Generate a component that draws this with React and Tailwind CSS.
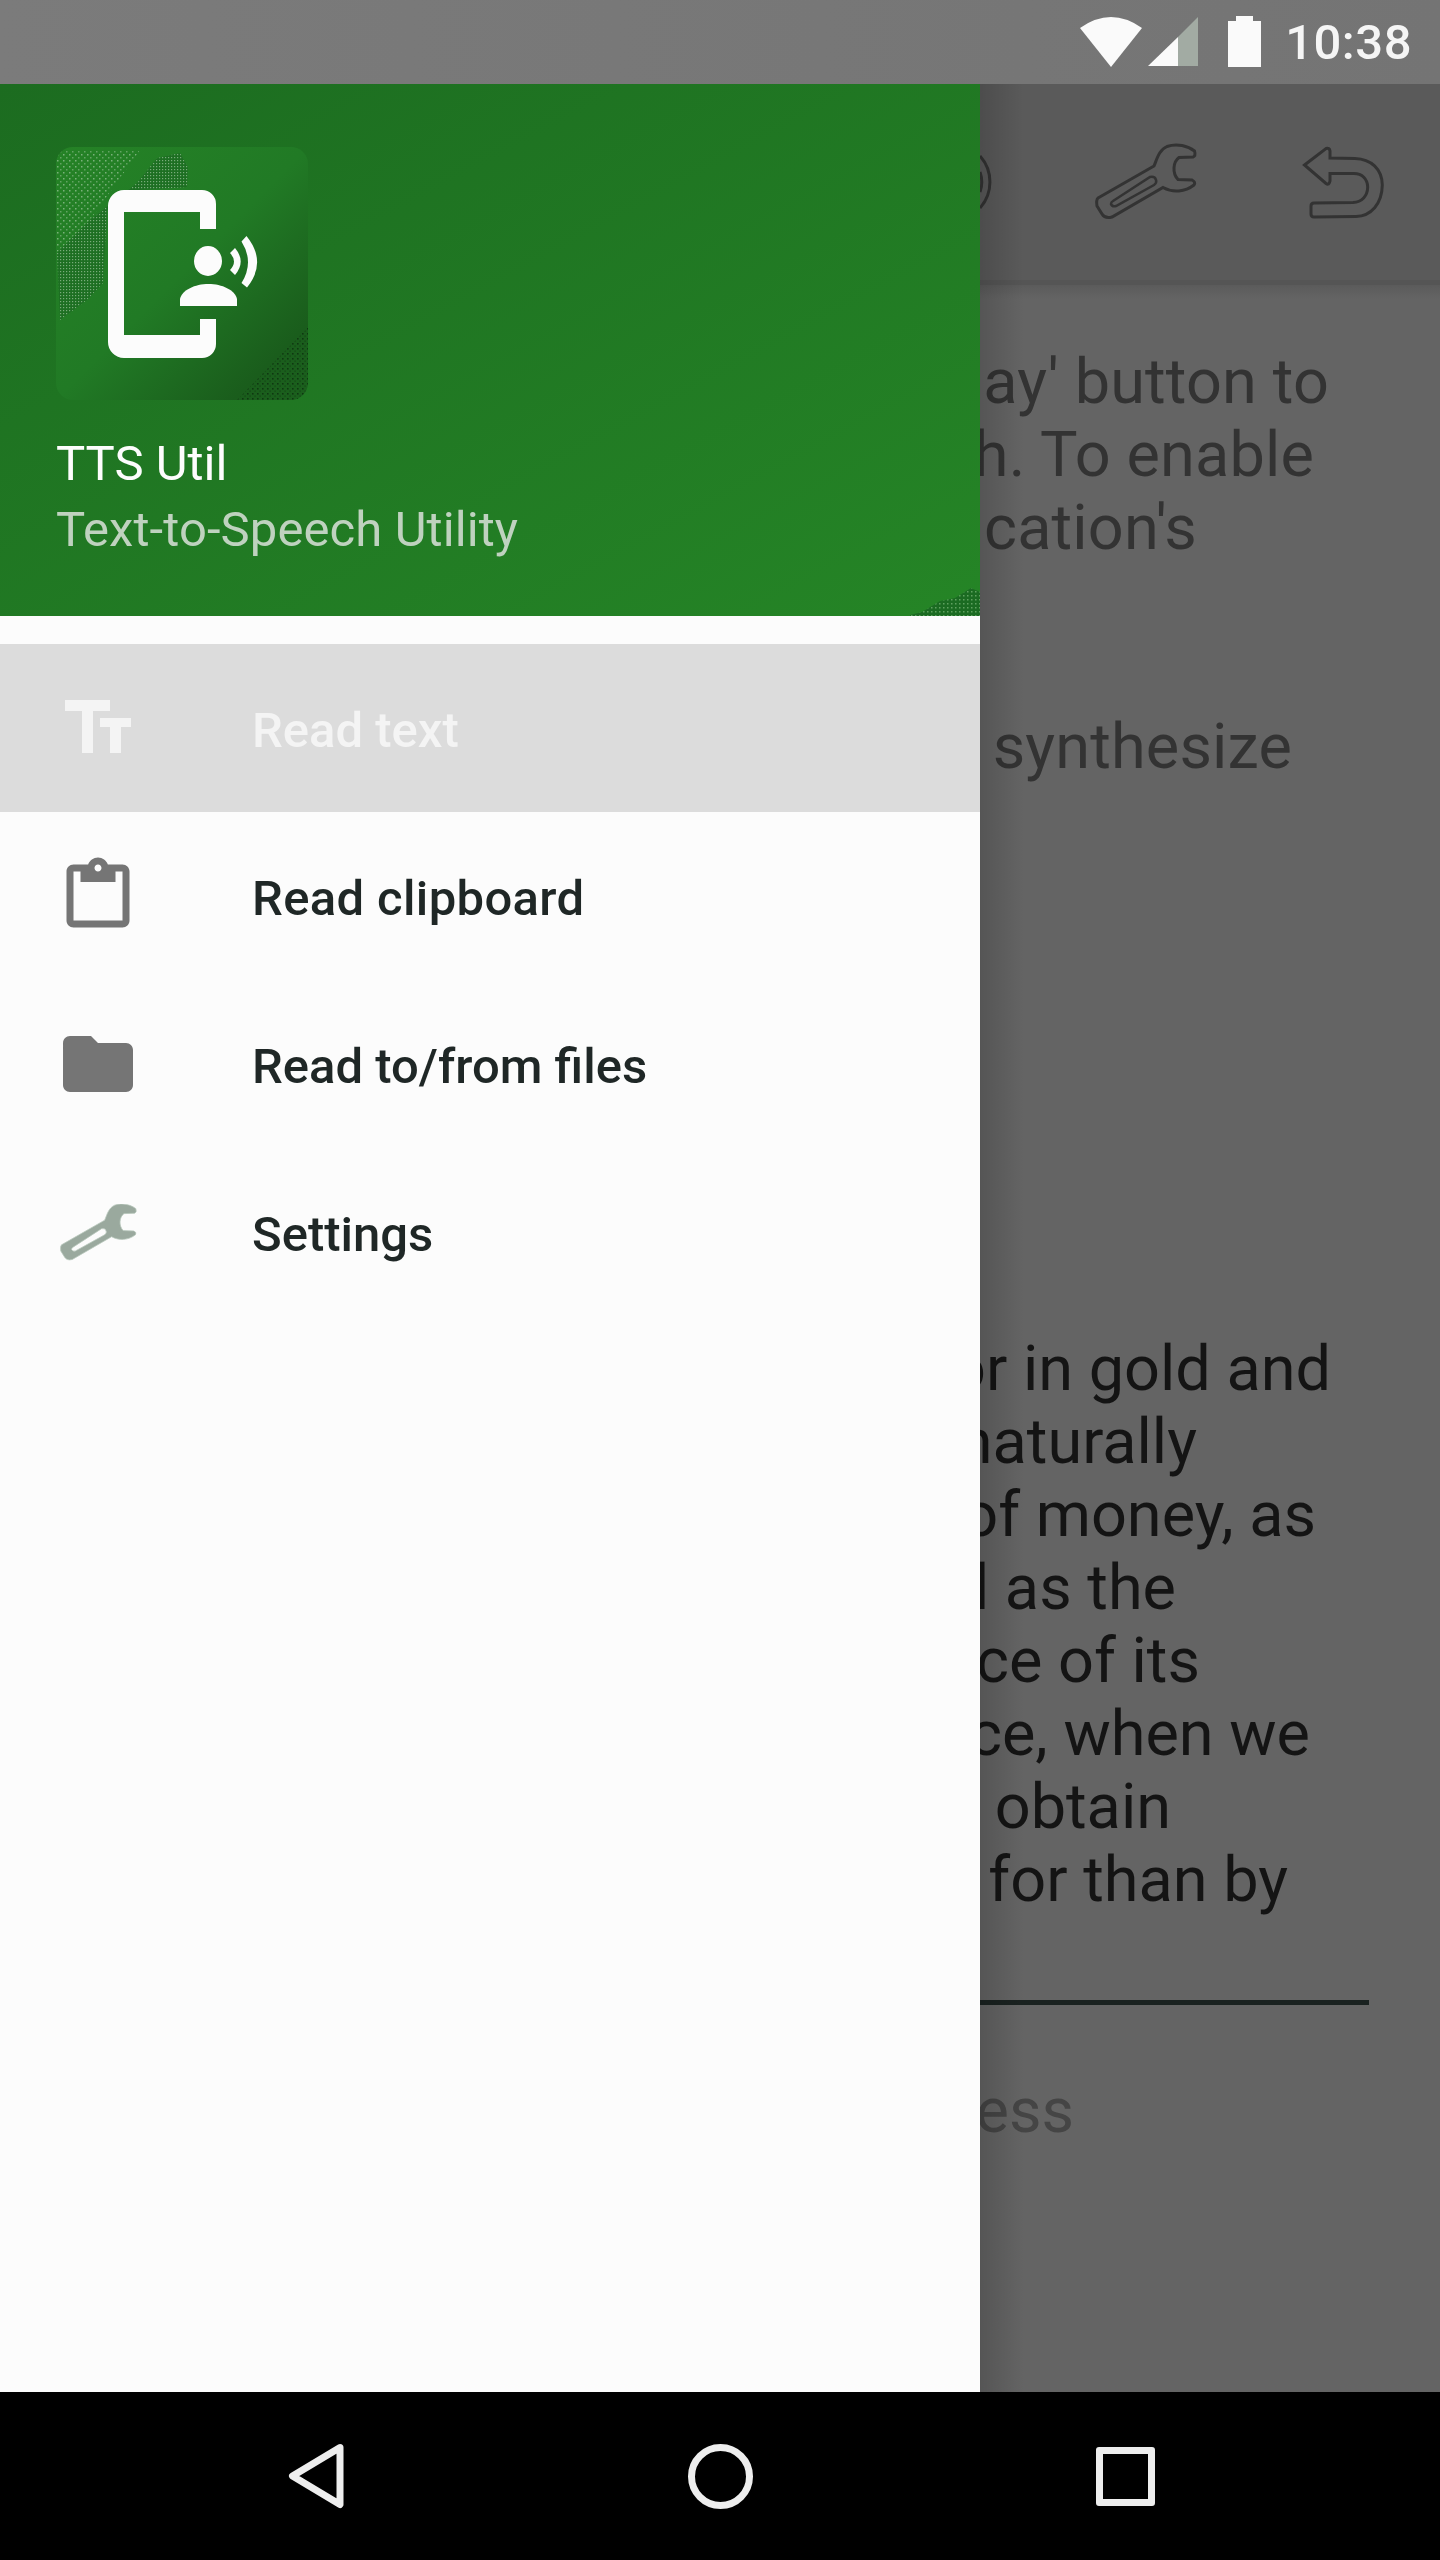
import React from "react";

const WRENCH_OUTER =
  "M13 63 L69 31 C72 24 74 15 82 11.5 C92 8 103 11 109.5 16 Q111 21 108 22 L94 22.5 C88 27 87 38 93 44.5 L107 45 Q111 47 109 50 C100 57 88 58 78 52.5 L27 82 Q20 84 17 79 L12 71 Q11 65 13 63 Z";
const WRENCH_SLOT =
  "M28 66 L65 42 Q70 41 71 45 Q72 48 69 50 L31 71 Q27 72 26 69 Q26 67 28 66 Z";

function StatusBar() {
  return (
    <div className="flex h-[84px] shrink-0 items-center justify-end bg-linear-to-r from-[#7b7b7b] to-[#747474] pr-[28px]">
      <svg width="62" height="50" viewBox="0 0 62 50" className="mr-[6px] mt-[-1px]">
        <path d="M0 11 Q31 -11 62 11 L31 50 Z" fill="#fafafa" />
      </svg>
      <svg width="50" height="50" viewBox="0 0 50 50" className="mr-[30px] mt-[-1px]">
        <polygon points="0,49 30,20 30,49" fill="#fafafa" />
        <polygon points="30,20 50,0 50,49 30,49" fill="#a2aba3" />
      </svg>
      <svg width="33" height="51" viewBox="0 0 33 51" className="mr-[24px] mt-[-1px]">
        <path d="M8 5V0H25V5H33V51H0V5Z" fill="#fafafa" />
      </svg>
      <span className="text-[49px] font-medium leading-none tracking-[0.5px] text-[#f5f5f5]">10:38</span>
    </div>
  );
}

function Logo() {
  return (
    <svg width="252" height="253" viewBox="0 0 252 253" className="shrink-0">
      <defs>
        <linearGradient id="logoBg" x1="0" y1="0" x2="1" y2="1">
          <stop offset="0" stopColor="#258226" />
          <stop offset="0.5" stopColor="#217a25" />
          <stop offset="0.85" stopColor="#1a5d1c" />
          <stop offset="1" stopColor="#1b601d" />
        </linearGradient>
        <pattern id="lightDots" width="6" height="6" patternUnits="userSpaceOnUse">
          <rect x="1" y="1" width="1.5" height="1.5" fill="#9fc79f" opacity="0.7" />
          <rect x="4" y="4" width="1.5" height="1.5" fill="#9fc79f" opacity="0.5" />
        </pattern>
        <pattern id="denseDots" width="3" height="3" patternUnits="userSpaceOnUse">
          <rect width="3" height="3" fill="#1d6f22" />
          <rect x="1" y="1" width="1.2" height="1.2" fill="#8fbb8f" opacity="0.8" />
        </pattern>
        <pattern id="darkDots" width="5" height="5" patternUnits="userSpaceOnUse">
          <rect x="1" y="1" width="1.6" height="1.6" fill="#0b2e0e" opacity="0.8" />
          <rect x="3.5" y="3.5" width="1.2" height="1.2" fill="#0b2e0e" opacity="0.6" />
        </pattern>
        <clipPath id="logoClip">
          <rect width="252" height="253" rx="17" />
        </clipPath>
      </defs>
      <rect width="252" height="253" rx="17" fill="url(#logoBg)" />
      <g clipPath="url(#logoClip)">
        <polygon points="0,3 84,3 34,73 0,106" fill="url(#lightDots)" />
        <polygon
          points="101,11 124,6 132,20 131,40 84,43 51,63 47,136 31,153 4,173 1,106 34,73 81,36"
          fill="url(#denseDots)"
        />
        <polygon points="181,253 252,180 252,253" fill="url(#darkDots)" />
      </g>
      <g transform="translate(-56 -147)" fill="#fcfcfc">
        <path d="M216 229 V204 a14 14 0 0 0 -14 -14 H124 a16 16 0 0 0 -16 16 V342 a16 16 0 0 0 16 16 H202 a14 14 0 0 0 14 -14 V319 H200 V335 H124 V212 H200 V229 Z" />
        <ellipse cx="208" cy="261" rx="14" ry="15" />
        <path d="M180 306 V299 C182 290 195 284 208.5 284 C222 284 235 290 237 299 V306 Z" />
        <path d="M235 248 Q246.4 261.5 235 275 L230 270 Q238 261.5 230 253 Z" />
        <path d="M246.5 236 Q267.5 262 247 287.5 L241.5 283 Q254.5 262 241.5 241.5 Z" />
      </g>
    </svg>
  );
}

function DrawerHeader() {
  return (
    <div className="relative h-[532px] shrink-0 bg-linear-to-br from-[#1c6c20] to-[#258526] pl-[56px] pt-[63px]">
      <Logo />
      <div className="mt-[31px] text-[49px] leading-[66px] text-[#fdfdfd]">TTS Util</div>
      <div className="text-[49px] leading-[66px] tracking-[0.1px] text-[#bfd2bf]">Text-to-Speech Utility</div>
      {/* speckled corner of the header artwork */}
      <svg width="70" height="30" viewBox="0 0 70 30" className="absolute bottom-0 right-0">
        <defs>
          <pattern id="cornerDots" width="4" height="4" patternUnits="userSpaceOnUse">
            <rect width="4" height="4" fill="#1b6b22" />
            <rect x="1" y="1" width="1.5" height="1.5" fill="#5fa15f" />
          </pattern>
        </defs>
        <polygon points="0,29 12,26 30,15 45,12 61,2 70,6 70,30 0,30" fill="url(#cornerDots)" />
      </svg>
    </div>
  );
}

const NAV_ROWS = [
  {
    label: "Read text",
    active: true,
    icon: (
      <svg width="84" height="84" viewBox="0 0 84 84" fill="#f4f4f4">
        <path d="M9 14H54V25H37V67H26V25H9Z" />
        <path d="M44 32H75V41H65V67H54V41H44Z" />
      </svg>
    ),
  },
  {
    label: "Read clipboard",
    tracking: "tracking-[0.35px]",
    icon: (
      <svg width="84" height="84" viewBox="0 0 24 24" fill="#757575">
        <path d="M19 3h-4.18C14.4 1.84 13.3 1 12 1c-1.3 0-2.4.84-2.82 2H5c-1.1 0-2 .9-2 2v14c0 1.1.9 2 2 2h14c1.1 0 2-.9 2-2V5c0-1.1-.9-2-2-2zm-7 0c.55 0 1 .45 1 1s-.45 1-1 1-1-.45-1-1 .45-1 1-1zm7 16H5V5h2v3h10V5h2v14z" />
      </svg>
    ),
  },
  {
    label: "Read to/from files",
    icon: (
      <svg width="84" height="84" viewBox="0 0 24 24" fill="#757575">
        <path d="M10 4H4c-1.1 0-1.99.9-1.99 2L2 18c0 1.1.9 2 2 2h16c1.1 0 2-.9 2-2V8c0-1.1-.9-2-2-2h-8l-2-2z" />
      </svg>
    ),
  },
  {
    label: "Settings",
    icon: (
      <svg width="77" height="57" viewBox="11 10 100 74" className="ml-[4px]">
        <path
          d={WRENCH_OUTER + " " + WRENCH_SLOT}
          fillRule="evenodd"
          fill="#9aa99e"
          stroke="#b9c9bc"
          strokeWidth="1"
        />
      </svg>
    ),
  },
];

function Drawer() {
  return (
    <div className="flex w-[980px] shrink-0 flex-col bg-[#fcfcfc]">
      <DrawerHeader />
      <div className="pt-[28px]">
        {NAV_ROWS.map((row) => (
          <div
            key={row.label}
            className={
              row.active
                ? "flex h-[168px] items-center bg-[#dcdcdc] pl-[56px] text-[#f4f4f4]"
                : "flex h-[168px] items-center pl-[56px] text-[#1f2726]"
            }
          >
            <div className="mr-[112px] flex h-[84px] w-[84px] shrink-0 items-center">{row.icon}</div>
            <span className={"pt-[4px] text-[49px] font-medium leading-none " + (row.tracking || "")}>{row.label}</span>
          </div>
        ))}
      </div>
    </div>
  );
}

function Toolbar() {
  return (
    <div className="relative flex h-[196px] shrink-0 items-center bg-[#5a5a5a] pl-[116px]">
      <svg width="12" height="60" viewBox="0 0 12 60" className="absolute left-0 top-[68px]">
        <path d="M0 4 A39 39 0 0 1 0 56" fill="none" stroke="#333" strokeWidth="3" />
        <path d="M0 20 A30 30 0 0 1 0 40" fill="none" stroke="#333" strokeWidth="3" />
      </svg>
      <svg width="100" height="74" viewBox="11 10 100 74" fill="none" stroke="#333" strokeWidth="3" className="mr-[108px] overflow-visible">
        <path d={WRENCH_OUTER} />
        <path d={WRENCH_SLOT} strokeWidth="2.5" />
      </svg>
      <svg width="79" height="71" viewBox="9 11 79 71" className="overflow-visible">
        <path
          d="M9.5 29 L31 12.5 Q34.5 11.5 35 15 L35 22 L60 22.5 C76 23 87 33 87.3 49 C87 68 76 80 61 80.5 L19 81 Q16 81 16 78 L16 70 Q16 67 19 67 L58 66.5 C67 66 72.5 60 72.7 51 C72.5 43 67 37.5 59 37.5 L35 37.5 L35 45 Q34 49.5 31 47.5 Z"
          fill="none"
          stroke="#333"
          strokeWidth="3"
        />
      </svg>
      <div className="absolute inset-x-0 top-full h-[5px] bg-[#555]" />
      <div className="absolute inset-x-0 top-[201px] h-[14px] bg-linear-to-b from-[#5b5b5b] to-transparent" />
    </div>
  );
}

function Line({ text, right }) {
  // right edge of the text is what shows, the start of each line is behind the drawer
  return (
    <div className={"flex h-[73px] justify-end whitespace-nowrap leading-[73px] " + right}>{text}</div>
  );
}

function Backdrop() {
  return (
    <div className="relative flex min-w-0 flex-1 flex-col overflow-hidden bg-[#646464] text-[63px] font-normal">
      <Toolbar />
      <div className="pt-[65px] tracking-[0.15px] text-[#333]">
        <Line text="ay' button to" right="pr-[111px]" />
        <Line text="h. To enable" right="pr-[126px]" />
        <Line text="ication's" right="pr-[243px]" />
        <div className="mt-[146px]">
          <Line text="synthesize" right="pr-[148px]" />
        </div>
      </div>
      <div className="mt-[549px] text-[#141414]">
        <Line text="or in gold and" right="pr-[109px]" />
        <Line text="naturally" right="pr-[243px]" />
        <Line text="of money, as" right="pr-[124px]" />
        <Line text="l as the" right="pr-[264px]" />
        <Line text="ce of its" right="pr-[240px]" />
        <Line text="ce, when we" right="pr-[130px]" />
        <Line text="obtain" right="pr-[269px]" />
        <Line text="for than by" right="pr-[152px]" />
      </div>
      <div className="mr-[71px] mt-[84px] h-[5px] bg-[#1a2220]" />
      <div className="mt-[69px] text-[#454545]">
        <Line text="ess" right="pr-[366px]" />
      </div>
      {/* drawer shadow */}
      <div className="absolute inset-y-0 left-0 w-[44px] bg-linear-to-r from-[#00000026] to-transparent" />
    </div>
  );
}

function NavBar() {
  return (
    <div className="flex h-[168px] shrink-0 items-center gap-[343px] bg-black pl-[288px]">
      <svg width="57" height="66" viewBox="0 0 57 66">
        <polygon points="52,4.5 4.5,33 52,61.5" fill="none" stroke="#eee" strokeWidth="7" strokeLinejoin="round" />
      </svg>
      <div className="h-[65px] w-[65px] rounded-full border-[7px] border-[#eee]" />
      <div className="h-[59px] w-[59px] rounded-[3px] border-[7px] border-[#eee]" />
    </div>
  );
}

export default function App() {
  return (
    <div className="flex h-[2560px] w-[1440px] flex-col overflow-hidden font-['Roboto',sans-serif]">
      <StatusBar />
      <div className="flex min-h-0 flex-1">
        <Drawer />
        <Backdrop />
      </div>
      <NavBar />
    </div>
  );
}
